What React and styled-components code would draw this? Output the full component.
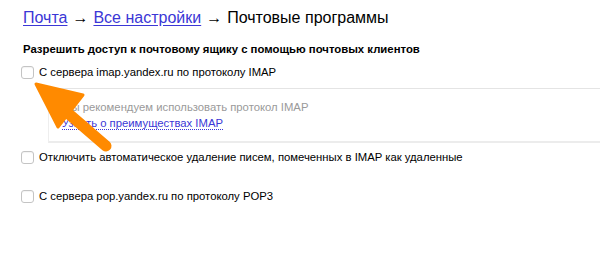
import React from 'react';
import styled, { createGlobalStyle } from 'styled-components';

const GlobalStyle = createGlobalStyle`
  html, body {
    margin: 0;
    padding: 0;
    background: #fff;
    font-family: "Liberation Sans", Arial, Helvetica, sans-serif;
    color: #000;
  }
`;

const Page = styled.div`
  position: relative;
  width: 600px;
  height: 255px;
  overflow: hidden;
  padding: 7px 0 0 23px;
  box-sizing: border-box;
`;

const Crumbs = styled.div`
  font-size: 16px;
  line-height: 22px;
  display: flex;
  gap: 5px;
  align-items: baseline;
  white-space: nowrap;
`;

const CrumbLink = styled.a`
  color: #3b37d6;
  text-decoration: underline;
  text-underline-offset: 2px;
`;

const Heading = styled.div`
  margin-top: 13px;
  font-size: 11.35px;
  font-weight: bold;
  line-height: 14px;
`;

const Row = styled.label`
  display: flex;
  align-items: center;
  gap: 5px;
  margin-left: -2px;
  margin-top: ${(p) => p.$top || 0}px;
  font-size: 11.3px;
  line-height: 14px;
  white-space: nowrap;
`;

const Box = styled.span`
  width: 11px;
  height: 11px;
  border: 1px solid #c4c4c4;
  border-radius: 3px;
  background: #fff;
  box-shadow: inset 0 1px 1px rgba(0, 0, 0, 0.05);
`;

const Panel = styled.div`
  margin: 9px 0 0 25px;
  padding: 10px 0 10px 13px;
  border-top: 1px solid #e4e4e4;
  border-left: 1px solid #eeeeee;
  border-bottom: 2px solid #ececec;
  font-size: 11.3px;
  line-height: 16px;
`;

const Hint = styled.div`
  color: #9a9a9a;
`;

const DotLink = styled.a`
  color: #3b37d6;
  text-decoration: none;
  border-bottom: 1px dotted #3b37d6;
`;

const Arrow = styled.svg`
  position: absolute;
  left: 0;
  top: 0;
  pointer-events: none;
`;

export default function App() {
  return (
    <Page>
      <GlobalStyle />
      <Crumbs>
        <CrumbLink href="#">Почта</CrumbLink>
        <span>→</span>
        <CrumbLink href="#">Все настройки</CrumbLink>
        <span>→</span>
        <span>Почтовые программы</span>
      </Crumbs>
      <Heading>Разрешить доступ к почтовому ящику с помощью почтовых клиентов</Heading>
      <Row $top={9}>
        <Box />
        С сервера imap.yandex.ru по протоколу IMAP
      </Row>
      <Panel>
        <Hint>Мы рекомендуем использовать протокол IMAP</Hint>
        <DotLink href="#">Узнать о преимуществах IMAP</DotLink>
      </Panel>
      <Row $top={7}>
        <Box />
        Отключить автоматическое удаление писем, помеченных в IMAP как удаленные
      </Row>
      <Row $top={25}>
        <Box />
        С сервера pop.yandex.ru по протоколу POP3
      </Row>
      <Arrow width="600" height="255">
        <line x1="62" y1="108" x2="106" y2="146" stroke="#ff8a00" strokeWidth="11" strokeLinecap="round" />
        <polygon points="36,84 83,95 58,127" fill="#ff8a00" stroke="#ff8a00" strokeWidth="3" strokeLinejoin="round" />
      </Arrow>
    </Page>
  );
}
